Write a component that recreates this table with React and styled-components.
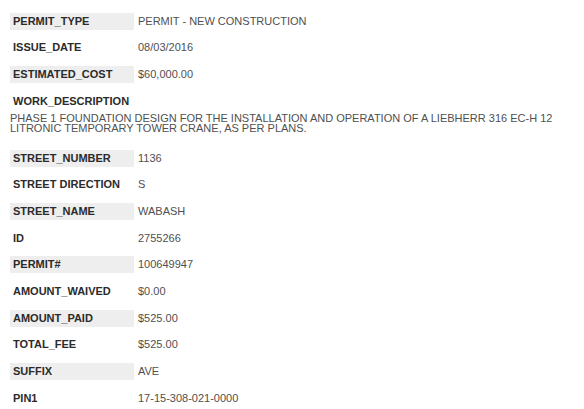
import React from "react";
import styled, { createGlobalStyle } from "styled-components";

const Global = createGlobalStyle`
  html, body { margin: 0; padding: 0; background: #ffffff; }
  body { font-family: "Liberation Sans", Arial, sans-serif; }
`;

const Page = styled.div`
  padding: 12.5px 10px 0 10px;
  display: flex;
  flex-direction: column;
  width: 564px;
  box-sizing: border-box;
`;

const Row = styled.div`
  display: flex;
  align-items: center;
  height: 17px;
  margin-bottom: 9.7px;
`;

const Label = styled.div`
  width: 124px;
  box-sizing: border-box;
  height: 17px;
  line-height: 17px;
  padding-left: 3px;
  font-size: 11px;
  font-weight: bold;
  color: #2b2b2b;
  background: ${(p) => (p.$shaded ? "#eeeeee" : "transparent")};
  white-space: nowrap;
`;

const Value = styled.div`
  padding-left: 4px;
  font-size: 11px;
  line-height: 17px;
  color: #505050;
  white-space: nowrap;
`;

const Block = styled.div`
  display: flex;
  flex-direction: column;
  margin-bottom: 17px;
`;

const BlockText = styled.div`
  margin-top: 3px;
  font-size: 11px;
  line-height: 10px;
  color: #505050;
`;

const top = [
  ["PERMIT_TYPE", "PERMIT - NEW CONSTRUCTION"],
  ["ISSUE_DATE", "08/03/2016"],
  ["ESTIMATED_COST", "$60,000.00"],
];

const rest = [
  ["STREET_NUMBER", "1136"],
  ["STREET DIRECTION", "S"],
  ["STREET_NAME", "WABASH"],
  ["ID", "2755266"],
  ["PERMIT#", "100649947"],
  ["AMOUNT_WAIVED", "$0.00"],
  ["AMOUNT_PAID", "$525.00"],
  ["TOTAL_FEE", "$525.00"],
  ["SUFFIX", "AVE"],
  ["PIN1", "17-15-308-021-0000"],
];

export default function App() {
  return (
    <Page>
      <Global />
      {top.map(([k, v], i) => (
        <Row key={k}>
          <Label $shaded={i % 2 === 0}>{k}</Label>
          <Value>{v}</Value>
        </Row>
      ))}
      <Block>
        <Label>WORK_DESCRIPTION</Label>
        <BlockText>
          PHASE 1 FOUNDATION DESIGN FOR THE INSTALLATION AND OPERATION OF A
          LIEBHERR 316 EC-H 12 LITRONIC TEMPORARY TOWER CRANE, AS PER PLANS.
        </BlockText>
      </Block>
      {rest.map(([k, v], i) => (
        <Row key={k}>
          <Label $shaded={i % 2 === 0}>{k}</Label>
          <Value>{v}</Value>
        </Row>
      ))}
    </Page>
  );
}
